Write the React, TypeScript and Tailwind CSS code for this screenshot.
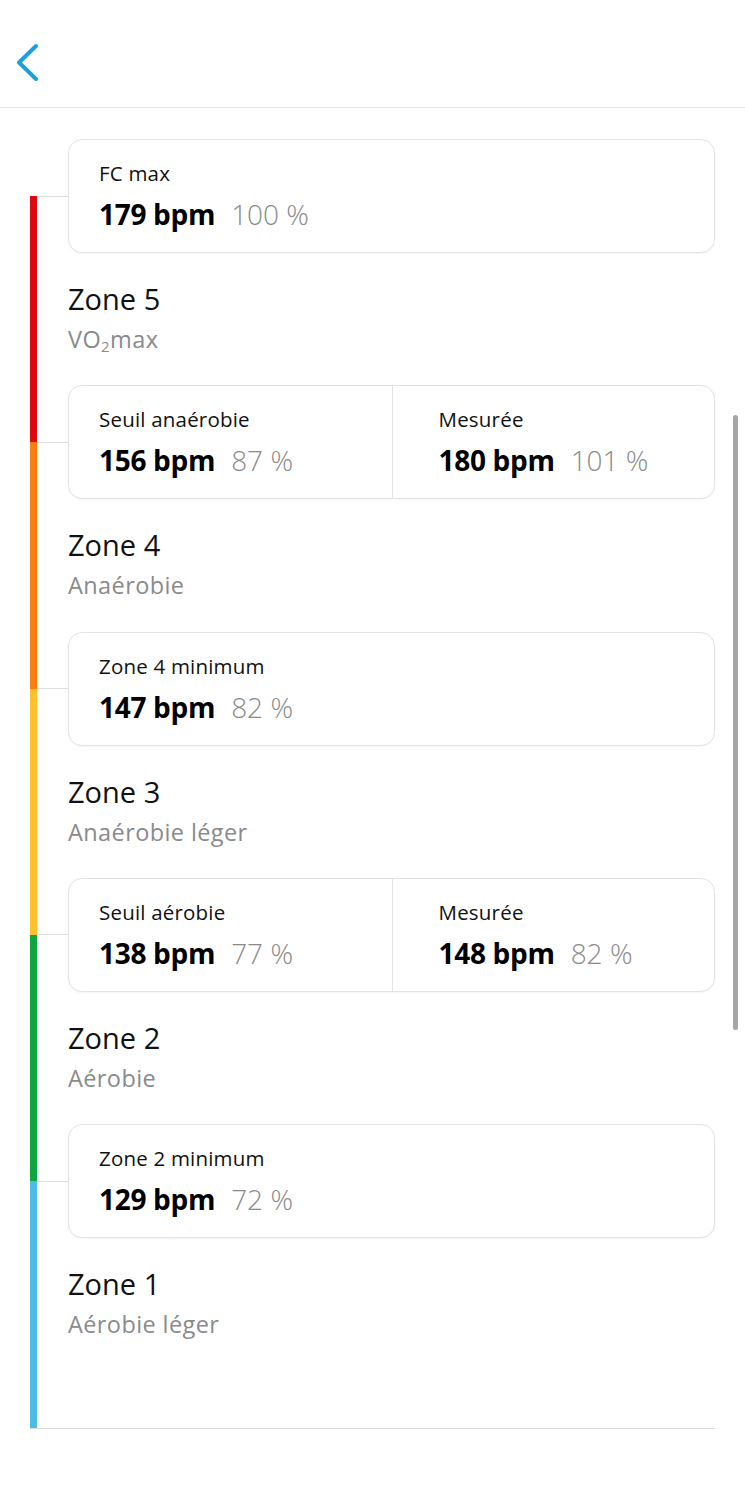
import React from "react";

const font = { fontFamily: '"Open Sans", "Liberation Sans", sans-serif' };

type Cell = { label: string; bpm: string; pct: string };

function Value({ c, right, half }: { c: Cell; right?: boolean; half?: boolean }) {
  return (
    <div
      className={`${half ? "w-1/2 shrink-0" : "flex-1"} flex flex-col pt-[20px] ${
        right ? "pl-[46px] border-l border-[#e3e3e3]" : "pl-[30px]"
      }`}
    >
      <div className="text-[20.5px] leading-[26px] tracking-[0.2px] text-[#111]">{c.label}</div>
      <div className="mt-[11px] flex items-baseline leading-[34px]">
        <span className="text-[28px] font-bold text-black tracking-[-0.3px]">{c.bpm}</span>
        <span className="ml-[16px] text-[28px] font-light text-[#8a8a8a]">{c.pct}</span>
      </div>
    </div>
  );
}

function CardRow({ cells }: { cells: Cell[] }) {
  return (
    <div className="flex h-[114px]">
      <div className="w-[31px] flex items-center">
        <div className="h-px w-full bg-[#dedede]" />
      </div>
      <div className="flex-1 flex rounded-[14px] border border-[#e3e3e3] bg-white shadow-[0_1px_2px_rgba(0,0,0,0.04)]">
        {cells.map((c, i) => (
          <Value key={i} c={c} right={i > 0} half={cells.length > 1} />
        ))}
      </div>
    </div>
  );
}

function Zone({ title, sub, last }: { title: string; sub: React.ReactNode; last?: boolean }) {
  return (
    <div className={`pl-[31px] pt-[28px] flex flex-col ${last ? "h-[190px]" : "h-[132.25px]"}`}>
      <div className="text-[29px] leading-[36px] text-[#111]">{title}</div>
      <div className="mt-[7px] text-[23.5px] leading-[30px] tracking-[0.4px] text-[#8a8a8a]">{sub}</div>
    </div>
  );
}

export default function App() {
  return (
    <div className="relative w-[745px] h-[1500px] bg-white" style={font}>
      <div className="h-[108px] border-b border-[#e2e2e2] flex items-center pl-[15px] pt-[17px]">
        <svg width="26" height="40" viewBox="0 0 26 40">
          <path d="M21 4 L4 20.5 L21 37" fill="none" stroke="#1ba0de" strokeWidth="4" strokeLinecap="round" strokeLinejoin="round" />
        </svg>
      </div>

      <div className="px-[30px] pt-[31px]">
        <div className="flex">
          <div className="w-[7px] flex flex-col pt-[57px]">
            <div className="h-[246.25px] bg-[#db0a12]" />
            <div className="h-[246.25px] bg-[#ff7e12]" />
            <div className="h-[246.25px] bg-[#fcc12c]" />
            <div className="h-[246.25px] bg-[#10a63f]" />
            <div className="flex-1 bg-[#4dbde6]" />
          </div>
          <div className="flex-1 flex flex-col">
            <CardRow cells={[{ label: "FC max", bpm: "179 bpm", pct: "100 %" }]} />
            <Zone
              title="Zone 5"
              sub={
                <span>
                  VO<span className="text-[15px] relative top-[4px]">2</span>max
                </span>
              }
            />
            <CardRow
              cells={[
                { label: "Seuil anaérobie", bpm: "156 bpm", pct: "87 %" },
                { label: "Mesurée", bpm: "180 bpm", pct: "101 %" },
              ]}
            />
            <Zone title="Zone 4" sub="Anaérobie" />
            <CardRow cells={[{ label: "Zone 4 minimum", bpm: "147 bpm", pct: "82 %" }]} />
            <Zone title="Zone 3" sub="Anaérobie léger" />
            <CardRow
              cells={[
                { label: "Seuil aérobie", bpm: "138 bpm", pct: "77 %" },
                { label: "Mesurée", bpm: "148 bpm", pct: "82 %" },
              ]}
            />
            <Zone title="Zone 2" sub="Aérobie" />
            <CardRow cells={[{ label: "Zone 2 minimum", bpm: "129 bpm", pct: "72 %" }]} />
            <Zone title="Zone 1" sub="Aérobie léger" last />
          </div>
        </div>
        <div className="h-px bg-[#dcdcdc]" />
      </div>

      <div className="absolute right-[7px] top-[415px] w-[5px] h-[615px] rounded-full bg-[#a6a6a6]" />
    </div>
  );
}
